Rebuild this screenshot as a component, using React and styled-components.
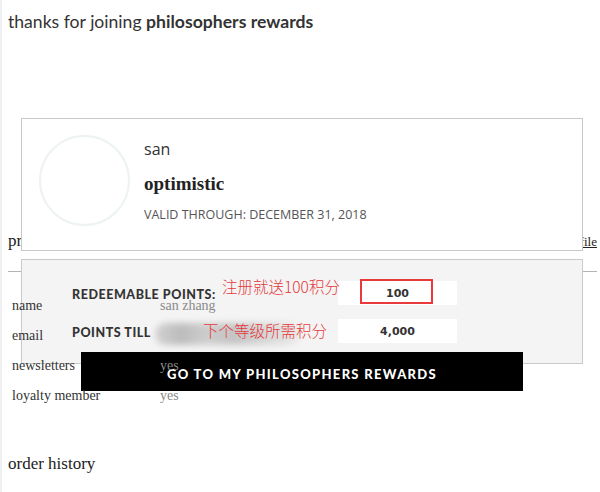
import React from 'react';
import styled, { createGlobalStyle } from 'styled-components';

const GlobalStyle = createGlobalStyle`
  html, body {
    margin: 0;
    padding: 0;
    background: #fff;
  }
  body {
    font-family: "Open Sans", "Liberation Sans", sans-serif;
    color: #333;
  }
`;

const Page = styled.div`
  position: relative;
  width: 600px;
  height: 492px;
  box-sizing: border-box;
  padding: 10px 3px 0 6px;
  border-left: 2px solid #efefef;
  overflow: hidden;
`;

const Title = styled.h1`
  margin: 0;
  font-family: "Lato", "Open Sans", sans-serif;
  font-size: 17.6px;
  line-height: 24px;
  font-weight: 400;
  color: #333;

  strong {
    font-weight: 700;
  }
`;

const SectionHead = styled.div`
  display: flex;
  justify-content: space-between;
  align-items: baseline;
  margin-top: ${p => p.$top}px;
`;

const SerifHeading = styled.h2`
  margin: 0;
  font-family: "Liberation Serif", serif;
  font-size: 17px;
  line-height: 22px;
  font-weight: 400;
  color: #222;
`;

const EditLink = styled.a`
  font-family: "Liberation Serif", serif;
  font-size: 13px;
  color: #222;
  text-decoration: underline;
`;

const Rule = styled.hr`
  margin: 19px 0 19px;
  border: 0;
  border-top: 1px solid #b5b5b5;
`;

// sits above the points panel, like the bleed-through in the capture
const InfoTable = styled.div`
  position: relative;
  z-index: 2;
  display: grid;
  grid-template-columns: 148px 1fr;
  padding-left: 4px;
`;

const Cell = styled.div`
  position: relative;
  font-family: "Liberation Serif", serif;
  font-size: 14px;
  line-height: 30px;
  height: 30px;
  color: ${p => (p.$muted ? '#8a8a8a' : '#333')};
`;

const Smudge = styled.div`
  position: absolute;
  left: -5px;
  top: 2px;
  width: 145px;
  height: 22px;
  border-radius: 11px;
  background: linear-gradient(90deg, #d2d2d2 0%, #bcbcbc 18%, #cdcdcd 35%, #c4c4c4 55%, #d9d9d9 80%, #e9e9e9 100%);
  filter: blur(3px);
`;

const Popup = styled.div`
  position: absolute;
  top: 118px;
  left: 19px;
  width: 562px;
  display: flex;
  flex-direction: column;
  gap: 8px;
`;

const MemberCard = styled.div`
  position: relative;
  z-index: 1;
  height: 133px;
  box-sizing: border-box;
  border: 1px solid #c9c9c9;
  background: #fff;
  display: flex;
  align-items: flex-start;
  padding: 16px 17px;
`;

const Avatar = styled.div`
  width: 91px;
  height: 91px;
  box-sizing: border-box;
  border-radius: 50%;
  border: 2px solid #edf3f1;
  flex-shrink: 0;
`;

const MemberInfo = styled.div`
  margin-left: 14px;
  padding-top: 3px;
  display: flex;
  flex-direction: column;
`;

const MemberName = styled.div`
  font-family: "Open Sans", "Liberation Sans", sans-serif;
  font-size: 16px;
  line-height: 22px;
  color: #333;
`;

const Tier = styled.div`
  margin-top: 11px;
  font-family: "Liberation Serif", serif;
  font-size: 19px;
  line-height: 26px;
  font-weight: 700;
  color: #222;
`;

const Valid = styled.div`
  margin-top: 10px;
  font-family: "Open Sans", "Liberation Sans", sans-serif;
  font-size: 12.5px;
  line-height: 16px;
  color: #555;
`;

const PointsPanel = styled.div`
  position: relative;
  z-index: 1;
  height: 105px;
  box-sizing: border-box;
  border: 1px solid #c9c9c9;
  background: #f4f4f4;
  padding-top: 21px;
  display: flex;
  flex-direction: column;
  align-items: center;
`;

const Rows = styled.div`
  align-self: stretch;
  padding-left: 50px;
  display: flex;
  flex-direction: column;
  gap: 14px;
`;

const PointsRow = styled.div`
  display: grid;
  grid-template-columns: 266px 119px;
  align-items: center;
`;

const PointsLabel = styled.div`
  font-family: "Lato", "Liberation Sans", sans-serif;
  font-size: 12.5px;
  font-weight: 900;
  letter-spacing: 0.55px;
  color: #333;
  padding-top: 2px;
`;

const ValueBox = styled.div`
  position: relative;
  height: 24px;
  background: #fff;
  display: flex;
  align-items: center;
  justify-content: center;
  font-family: "DejaVu Sans", Verdana, sans-serif;
  font-size: 11px;
  font-weight: 700;
  color: #333;
`;

const RedBox = styled.div`
  position: absolute;
  left: 22px;
  top: -2px;
  width: 73px;
  height: 25px;
  box-sizing: border-box;
  border: 2px solid #e8393b;
`;

// red annotations drawn over the whole capture
const Note = styled.div`
  position: absolute;
  z-index: 3;
  left: ${p => p.$left}px;
  top: ${p => p.$top}px;
  font-family: "Noto Sans CJK SC", sans-serif;
  font-size: 15.5px;
  line-height: 20px;
  font-weight: 300;
  color: #e5383b;
  white-space: nowrap;
`;

const GoButton = styled.button`
  margin-top: 9px;
  width: 442px;
  height: 39px;
  flex-shrink: 0;
  border: 0;
  background: #000;
  color: #fff;
  font-family: "Lato", "Liberation Sans", sans-serif;
  font-size: 13px;
  font-weight: 900;
  letter-spacing: 1.3px;
  padding-top: 5px;
  cursor: pointer;
`;

const profile = [
  ['name', 'san zhang'],
  ['email', ''],
  ['newsletters', 'yes'],
  ['loyalty member', 'yes'],
];

export default function App() {
  return (
    <>
      <GlobalStyle />
      <Page>
        <Title>
          thanks for joining <strong>philosophers rewards</strong>
        </Title>

        <SectionHead $top={196}>
          <SerifHeading>profile</SerifHeading>
          <EditLink>edit profile</EditLink>
        </SectionHead>
        <Rule />

        <InfoTable>
          {profile.map(([label, value]) => (
            <React.Fragment key={label}>
              <Cell>{label}</Cell>
              <Cell $muted>
                {value}
                {label === 'email' && <Smudge />}
              </Cell>
            </React.Fragment>
          ))}
        </InfoTable>

        <SectionHead $top={42}>
          <SerifHeading>order history</SerifHeading>
        </SectionHead>

        <Popup>
          <MemberCard>
            <Avatar />
            <MemberInfo>
              <MemberName>san</MemberName>
              <Tier>optimistic</Tier>
              <Valid>VALID THROUGH: DECEMBER 31, 2018</Valid>
            </MemberInfo>
          </MemberCard>

          <PointsPanel>
            <Rows>
              <PointsRow>
                <PointsLabel>REDEEMABLE POINTS:</PointsLabel>
                <ValueBox>
                  100
                  <RedBox />
                </ValueBox>
              </PointsRow>
              <PointsRow>
                <PointsLabel>POINTS TILL</PointsLabel>
                <ValueBox>4,000</ValueBox>
              </PointsRow>
            </Rows>
            <GoButton>GO TO MY PHILOSOPHERS REWARDS</GoButton>
          </PointsPanel>
        </Popup>

        <Note $left={220} $top={276}>注册就送100积分</Note>
        <Note $left={201} $top={320}>下个等级所需积分</Note>
      </Page>
    </>
  );
}
